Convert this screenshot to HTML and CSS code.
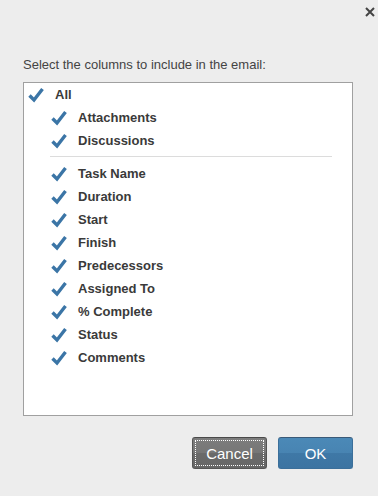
FILE: index.html
```html
<!DOCTYPE html>
<html>
<head>
<meta charset="utf-8">
<link rel="stylesheet" href="styles.css">
</head>
<body>
<div class="dialog">
  <div class="topbar">
    <svg class="close" width="10" height="10" viewBox="0 0 10 10"><path d="M1 1L9 9M9 1L1 9" stroke="#444" stroke-width="2"/></svg>
  </div>
  <div class="label">Select the columns to include in the email:</div>
  <div class="listbox">
    <div class="row top"><svg class="chk" viewBox="0 0 16 16"><path d="M1.5 8.5L6 13L14.5 2" fill="none" stroke="#3b75a6" stroke-width="3.4"/></svg><span>All</span></div>
    <div class="row sub"><svg class="chk" viewBox="0 0 16 16"><path d="M1.5 8.5L6 13L14.5 2" fill="none" stroke="#3b75a6" stroke-width="3.4"/></svg><span>Attachments</span></div>
    <div class="row sub"><svg class="chk" viewBox="0 0 16 16"><path d="M1.5 8.5L6 13L14.5 2" fill="none" stroke="#3b75a6" stroke-width="3.4"/></svg><span>Discussions</span></div>
    <div class="sep"></div>
    <div class="row sub"><svg class="chk" viewBox="0 0 16 16"><path d="M1.5 8.5L6 13L14.5 2" fill="none" stroke="#3b75a6" stroke-width="3.4"/></svg><span>Task Name</span></div>
    <div class="row sub"><svg class="chk" viewBox="0 0 16 16"><path d="M1.5 8.5L6 13L14.5 2" fill="none" stroke="#3b75a6" stroke-width="3.4"/></svg><span>Duration</span></div>
    <div class="row sub"><svg class="chk" viewBox="0 0 16 16"><path d="M1.5 8.5L6 13L14.5 2" fill="none" stroke="#3b75a6" stroke-width="3.4"/></svg><span>Start</span></div>
    <div class="row sub"><svg class="chk" viewBox="0 0 16 16"><path d="M1.5 8.5L6 13L14.5 2" fill="none" stroke="#3b75a6" stroke-width="3.4"/></svg><span>Finish</span></div>
    <div class="row sub"><svg class="chk" viewBox="0 0 16 16"><path d="M1.5 8.5L6 13L14.5 2" fill="none" stroke="#3b75a6" stroke-width="3.4"/></svg><span>Predecessors</span></div>
    <div class="row sub"><svg class="chk" viewBox="0 0 16 16"><path d="M1.5 8.5L6 13L14.5 2" fill="none" stroke="#3b75a6" stroke-width="3.4"/></svg><span>Assigned To</span></div>
    <div class="row sub"><svg class="chk" viewBox="0 0 16 16"><path d="M1.5 8.5L6 13L14.5 2" fill="none" stroke="#3b75a6" stroke-width="3.4"/></svg><span>% Complete</span></div>
    <div class="row sub"><svg class="chk" viewBox="0 0 16 16"><path d="M1.5 8.5L6 13L14.5 2" fill="none" stroke="#3b75a6" stroke-width="3.4"/></svg><span>Status</span></div>
    <div class="row sub"><svg class="chk" viewBox="0 0 16 16"><path d="M1.5 8.5L6 13L14.5 2" fill="none" stroke="#3b75a6" stroke-width="3.4"/></svg><span>Comments</span></div>
  </div>
  <div class="buttons">
    <button class="btn cancel"><span class="focus">Cancel</span></button>
    <button class="btn ok">OK</button>
  </div>
</div>
</body>
</html>
```

FILE: styles.css
```css
html, body {
  margin: 0;
  padding: 0;
  background: #ededed;
  width: 378px;
  height: 496px;
  overflow: hidden;
  font-family: "Liberation Sans", Arial, sans-serif;
}
.dialog {
  display: flex;
  flex-direction: column;
  padding: 0 25px 0 23px;
}
.topbar {
  height: 57px;
  display: flex;
  justify-content: flex-end;
  margin-right: -22px;
}
.close {
  margin-top: 7px;
  width: 10px;
  height: 10px;
}
.label {
  font-size: 13px;
  color: #444;
  line-height: 16px;
  height: 25px;
}
.listbox {
  background: #fff;
  border: 1px solid #a0a0a0;
  box-sizing: border-box;
  height: 334px;
}
.row {
  display: flex;
  align-items: center;
  height: 23px;
  font-size: 13px;
  font-weight: bold;
  color: #3a3a3a;
}
.row.top { padding-left: 4px; }
.row.sub { padding-left: 27px; }
.chk {
  width: 16px;
  height: 16px;
  margin-right: 11px;
}
.sep {
  height: 1px;
  background: #dcdcdc;
  margin: 4px 20px 5px 26px;
}
.buttons {
  display: flex;
  justify-content: flex-end;
  gap: 11px;
  margin-top: 21px;
}
.btn {
  width: 75px;
  height: 32px;
  border-radius: 3px;
  font-family: "Liberation Sans", Arial, sans-serif;
  font-size: 15px;
  color: #fff;
  padding: 0;
  display: flex;
  align-items: center;
  justify-content: center;
}
.cancel {
  background: linear-gradient(#7d7d7d 0%, #767676 50%, #6a6a6a 51%, #666 100%);
  border: 1px solid #555;
  border-top-color: #4a4a4a;
  padding: 2px;
}
.cancel .focus {
  flex: 1;
  align-self: stretch;
  border: 1px dotted #fff;
  display: flex;
  align-items: center;
  justify-content: center;
}
.ok {
  background: linear-gradient(#4b89b7 0%, #4884b2 50%, #3f78a6 51%, #3c74a2 100%);
  border: 1px solid #3b6f9a;
  border-top-color: #3a5a78;
}
```
